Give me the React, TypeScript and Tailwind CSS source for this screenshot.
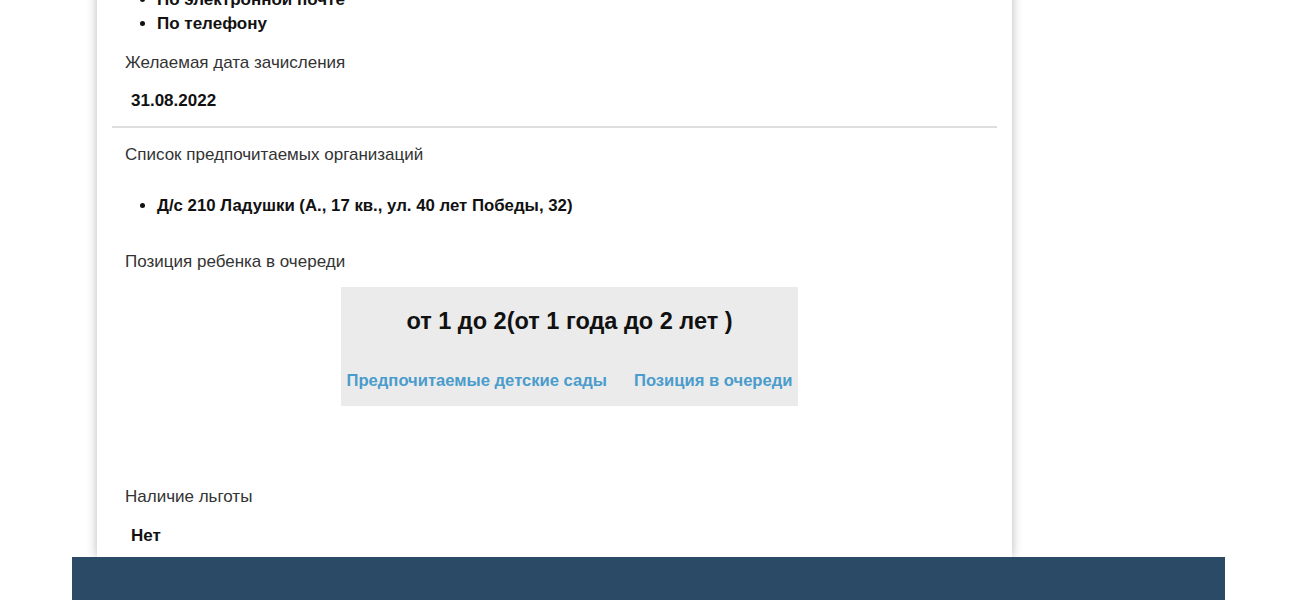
export default function App() {
  return (
    <div className="min-h-[600px] w-full overflow-hidden bg-white font-['Liberation_Sans',Arial,sans-serif] text-[17px] text-[#222]">
      {/* Application card */}
      <div className="-mt-[12px] ml-[97px] w-[915px] bg-white px-[15px] pb-[9px] shadow-[0_0_10px_rgba(0,0,0,0.28)]">
        <div className="px-[13px]">
          <ul className="list-disc pl-[32px] font-bold leading-[24px] text-[#111]">
            <li>По электронной почте</li>
            <li>По телефону</li>
          </ul>
          <div className="mt-[15px] leading-[24px] text-[#333]">Желаемая дата зачисления</div>
          <div className="mt-[14px] pl-[6px] font-bold leading-[24px] text-[#111]">31.08.2022</div>
        </div>

        <div className="mt-[13px] h-[2px] bg-[#dedede]" />

        <div className="px-[13px]">
          <div className="mt-[15px] leading-[24px] text-[#333]">Список предпочитаемых организаций</div>
          <ul className="mt-[27px] list-disc pl-[32px] text-[16.8px] font-bold leading-[24px] text-[#111]">
            <li>Д/с 210 Ладушки (А., 17 кв., ул. 40 лет Победы, 32)</li>
          </ul>
          <div className="mt-[32px] leading-[24px] text-[#333]">Позиция ребенка в очереди</div>

          <div className="ml-[216px] mt-[13px] w-[457px] bg-[#ebebeb] pb-[13px] pt-[22px]">
            <div className="text-center text-[23.5px] font-bold leading-[24px] text-[#111]">
              от 1 до 2(от 1 года до 2 лет )
            </div>
            <div className="mt-[36px] flex justify-center gap-[27px] whitespace-nowrap text-[16.6px] font-bold leading-[24px] text-[#4a9ccc]">
              <a href="#">Предпочитаемые детские сады</a>
              <a href="#">Позиция в очереди</a>
            </div>
          </div>

          <div className="mt-[79px] leading-[24px] text-[#333]">Наличие льготы</div>
          <div className="mt-[15px] pl-[6px] font-bold leading-[24px] text-[#111]">Нет</div>
        </div>
      </div>

      {/* Footer */}
      <footer className="ml-[72px] h-[60px] w-[1153px] bg-[#2b4a66]" />
    </div>
  );
}
